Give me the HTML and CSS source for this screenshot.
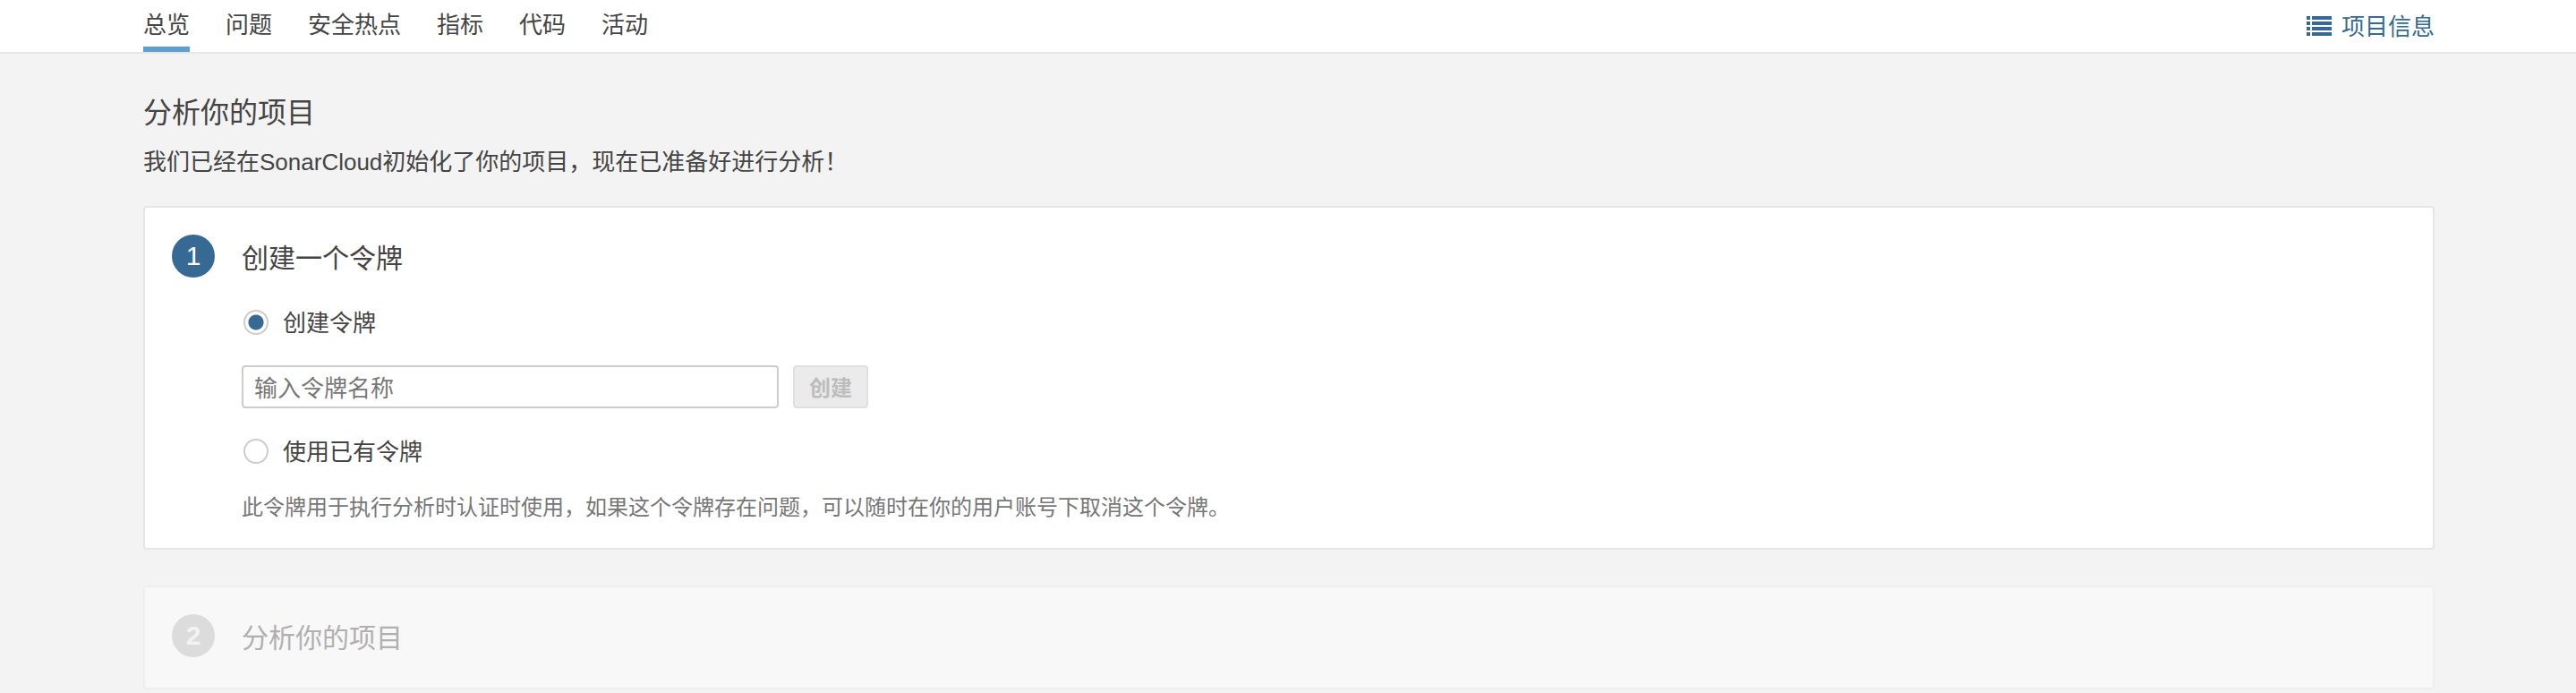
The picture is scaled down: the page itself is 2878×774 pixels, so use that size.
FILE: index.html
```html
<!DOCTYPE html>
<html lang="zh-CN">

<head>
    <meta charset="UTF-8">
    <title>分析你的项目</title>
    <link rel="stylesheet" href="styles.css">
</head>

<body>
    <nav class="topnav">
        <div class="topnav-inner">
            <ul class="tabs">
                <li class="tab active">总览</li>
                <li class="tab">问题</li>
                <li class="tab">安全热点</li>
                <li class="tab">指标</li>
                <li class="tab">代码</li>
                <li class="tab">活动</li>
            </ul>
            <a class="project-info" href="#">
                <svg class="list-icon" width="28" height="22" viewBox="0 0 28 22" fill="#366a94">
                    <rect x="0" y="0" width="4" height="4" />
                    <rect x="6" y="0" width="22" height="4" />
                    <rect x="0" y="6" width="4" height="4" />
                    <rect x="6" y="6" width="22" height="4" />
                    <rect x="0" y="12" width="4" height="4" />
                    <rect x="6" y="12" width="22" height="4" />
                    <rect x="0" y="18" width="4" height="4" />
                    <rect x="6" y="18" width="22" height="4" />
                </svg>
                项目信息
            </a>
        </div>
    </nav>

    <main>
        <h1>分析你的项目</h1>
        <p class="intro">我们已经在SonarCloud初始化了你的项目，现在已准备好进行分析！</p>

        <section class="step">
            <div class="step-head">
                <span class="step-num">1</span>
                <h2>创建一个令牌</h2>
            </div>
            <div class="step-body">
                <label class="radio-row"><input type="radio" name="token" checked> <span>创建令牌</span></label>
                <form class="token-form">
                    <input class="token-input" type="text" placeholder="输入令牌名称">
                    <button class="token-btn" type="button" disabled>创建</button>
                </form>
                <label class="radio-row"><input type="radio" name="token"> <span>使用已有令牌</span></label>
                <p class="hint">此令牌用于执行分析时认证时使用，如果这个令牌存在问题，可以随时在你的用户账号下取消这个令牌。</p>
            </div>
        </section>

        <section class="step disabled">
            <div class="step-head">
                <span class="step-num">2</span>
                <h2>分析你的项目</h2>
            </div>
        </section>
    </main>
</body>

</html>
```

FILE: styles.css
```css
* {
    margin: 0;
    padding: 0;
    box-sizing: border-box;
}

html,
body {
    height: 774px;
    overflow: hidden;
}

body {
    font-family: "Liberation Sans", "Noto Sans CJK SC", sans-serif;
    font-size: 26px;
    color: #444;
    background: #f3f3f3;
}

/* Top navigation */
.topnav {
    height: 60px;
    background: #fff;
    border-bottom: 2px solid #e6e6e6;
}

.topnav-inner {
    width: 2560px;
    height: 58px;
    margin-left: 160px;
    display: flex;
    justify-content: space-between;
}

.tabs {
    display: flex;
    gap: 40px;
    list-style: none;
}

.tab {
    height: 58px;
    line-height: 56px;
    color: #444;
}

.tab.active {
    border-bottom: 6px solid #5f9fd0;
}

.project-info {
    display: flex;
    align-items: center;
    gap: 11px;
    height: 54px;
    color: #366a94;
    text-decoration: none;
}

.list-icon {
    margin-top: 4px;
}

/* Page content */
main {
    width: 2560px;
    margin-left: 160px;
    padding-top: 46px;
}

h1 {
    font-size: 32px;
    font-weight: 400;
    line-height: 40px;
    margin-bottom: 17px;
}

.intro {
    line-height: 36px;
    margin-bottom: 31px;
}

.step {
    background: #fff;
    border: 2px solid #e6e6e6;
    border-radius: 4px;
    padding: 30px 30px 29px;
    margin-bottom: 40px;
}

.step-head {
    display: flex;
    align-items: flex-start;
    gap: 30px;
    height: 48px;
}

.step-num {
    width: 48px;
    height: 48px;
    border-radius: 50%;
    background: #366a94;
    color: #fff;
    font-size: 30px;
    line-height: 48px;
    text-align: center;
}

h2 {
    font-size: 30px;
    font-weight: 400;
    line-height: 54px;
}

.step-body {
    margin-left: 78px;
    padding-top: 36px;
}

.radio-row {
    display: flex;
    align-items: center;
    gap: 16px;
    height: 28px;
    margin-left: 2px;
}

.radio-row span {
    padding-bottom: 4px;
}

.radio-row input {
    appearance: none;
    width: 28px;
    height: 28px;
    border: 2px solid #cdcdcd;
    border-radius: 50%;
    background: #fff;
}

.radio-row input:checked {
    background: radial-gradient(circle, #366a94 0, #366a94 8px, #fff 9px);
}

.token-form {
    display: flex;
    gap: 16px;
    margin: 34px 0;
}

.token-input {
    width: 600px;
    height: 48px;
    padding: 4px 12px 0;
    border: 2px solid #cdcdcd;
    border-radius: 4px;
    font: inherit;
    color: #444;
}

.token-input::placeholder {
    color: #777;
    opacity: 1;
}

.token-btn {
    width: 84px;
    height: 48px;
    padding-bottom: 2px;
    background: #ebebeb;
    border: 2px solid #e0e0e0;
    border-radius: 4px;
    font-family: inherit;
    font-size: 24px;
    font-weight: 700;
    color: #bdbdbd;
}

.hint {
    margin-top: 31px;
    margin-bottom: -2px;
    font-size: 24px;
    line-height: 36px;
    color: #777;
}

/* Step that is not reached yet */
.step.disabled {
    background: #f8f8f8;
    border-color: #eeeeee;
    padding-bottom: 34px;
    margin-bottom: 0;
}

.step.disabled .step-num {
    background: #dcdcdc;
    color: #f3f3f3;
    font-weight: 700;
}

.step.disabled h2 {
    color: #b0b0b0;
}
```
